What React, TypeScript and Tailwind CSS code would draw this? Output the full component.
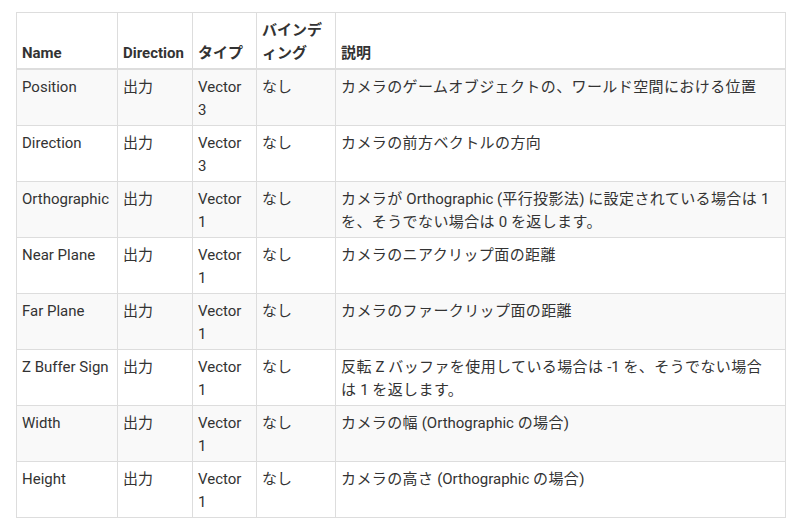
const rows = [
  { name: "Position", type: "Vector 3", desc: "カメラのゲームオブジェクトの、ワールド空間における位置" },
  { name: "Direction", type: "Vector 3", desc: "カメラの前方ベクトルの方向" },
  {
    name: "Orthographic",
    type: "Vector 1",
    desc: "カメラが Orthographic (平行投影法) に設定されている場合は 1 を、そうでない場合は 0 を返します。",
  },
  { name: "Near Plane", type: "Vector 1", desc: "カメラのニアクリップ面の距離" },
  { name: "Far Plane", type: "Vector 1", desc: "カメラのファークリップ面の距離" },
  {
    name: "Z Buffer Sign",
    type: "Vector 1",
    desc: "反転 Z バッファを使用している場合は -1 を、そうでない場合は 1 を返します。",
  },
  { name: "Width", type: "Vector 1", desc: "カメラの幅 (Orthographic の場合)" },
  { name: "Height", type: "Vector 1", desc: "カメラの高さ (Orthographic の場合)" },
]

const th = "border border-[#ddd] border-b-2 px-[5px] pt-[6px] pb-[4px] text-left align-bottom font-bold"
const td = "border border-[#ddd] px-[5px] pt-[6px] pb-[4px] align-top"

// japanese runs get a touch of extra spacing, latin stays as is
const Desc = ({ text }: { text: string }) => (
  <>
    {text.split(/([\u3000-\u30ff\u4e00-\u9fff\uff00-\uffef]+)/).map((part, i) =>
      i % 2 === 1 ? (
        <span key={i} className="tracking-[0.4px]">
          {part}
        </span>
      ) : (
        part
      )
    )}
  </>
)

export default function App() {
  return (
    <div
      className="min-h-screen bg-white pl-4 pt-3 text-[15px] leading-[22.5px] text-[#333]"
      style={{ fontFamily: 'Roboto, "Noto Sans CJK JP", sans-serif' }}
    >
      <table className="w-[769px] table-fixed border-collapse border border-[#ddd]">
        <colgroup>
          <col className="w-[101px]" />
          <col className="w-[75px]" />
          <col className="w-[64px]" />
          <col className="w-[79px]" />
          <col className="w-[450px]" />
        </colgroup>
        <thead>
          <tr>
            <th className={th}>Name</th>
            <th className={th}>Direction</th>
            <th className={th}>タイプ</th>
            <th className={th}>バインディング</th>
            <th className={th}>説明</th>
          </tr>
        </thead>
        <tbody>
          {rows.map((r, i) => (
            <tr key={r.name} className={i % 2 === 0 ? "bg-[#f9f9f9]" : "bg-white"}>
              <td className={td}>{r.name}</td>
              <td className={td}>出力</td>
              <td className={td}>{r.type}</td>
              <td className={td}>なし</td>
              <td className={td + " pr-[10px]"}>
                <Desc text={r.desc} />
              </td>
            </tr>
          ))}
        </tbody>
      </table>
    </div>
  )
}
